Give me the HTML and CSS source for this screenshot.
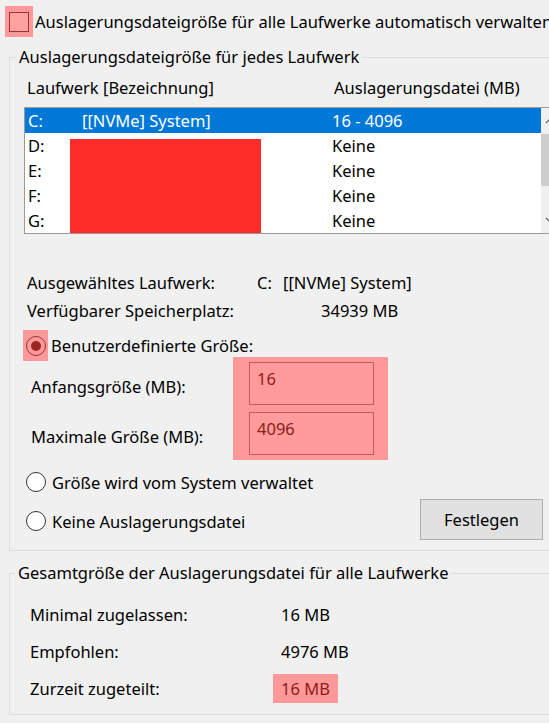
FILE: index.html
```html
<!DOCTYPE html>
<html lang="de">
<head>
    <meta charset="UTF-8">
    <meta name="viewport" content="width=device-width, initial-scale=1.0">
    <title>Virtueller Arbeitsspeicher</title>
    <link rel="stylesheet" href="styles.css">
</head>
<body>
    <div class="dialog">
        <!-- Automatic management checkbox -->
        <label class="auto-row">
            <span class="mark check-mark"><span class="checkbox"></span></span>
            <span class="auto-text">Auslagerungsdateigröße für alle Laufwerke automatisch verwalten</span>
        </label>

        <!-- Per drive settings -->
        <fieldset class="group drives">
            <legend>Auslagerungsdateigröße für jedes Laufwerk</legend>

            <div class="list-head">
                <span class="col-drive">Laufwerk [Bezeichnung]</span>
                <span>Auslagerungsdatei (MB)</span>
            </div>

            <div class="drive-list">
                <div class="rows">
                    <div class="row selected"><span>C:</span><span>[[NVMe] System]</span><span>16 - 4096</span></div>
                    <div class="row"><span>D:</span><span></span><span>Keine</span></div>
                    <div class="row"><span>E:</span><span></span><span>Keine</span></div>
                    <div class="row"><span>F:</span><span></span><span>Keine</span></div>
                    <div class="row"><span>G:</span><span></span><span>Keine</span></div>
                </div>
                <div class="scrollbar">
                    <div class="scroll-btn">
                        <svg width="9" height="6" viewBox="0 0 9 6"><polyline points="1,5 4.5,1.5 8,5" fill="none" stroke="#606060" stroke-width="1.2"/></svg>
                    </div>
                    <div class="thumb"></div>
                    <div class="track"></div>
                    <div class="scroll-btn">
                        <svg width="9" height="6" viewBox="0 0 9 6"><polyline points="1,1 4.5,4.5 8,1" fill="none" stroke="#606060" stroke-width="1.2"/></svg>
                    </div>
                </div>
                <!-- hidden drive names -->
                <div class="redact"></div>
            </div>

            <div class="info-row">
                <span class="info-label">Ausgewähltes Laufwerk:</span>
                <span class="drive-letter">C:</span><span>[[NVMe] System]</span>
            </div>
            <div class="info-row">
                <span class="info-label">Verfügbarer Speicherplatz:</span>
                <span class="free-space">34939 MB</span>
            </div>

            <label class="radio-row custom">
                <span class="mark radio-mark"><span class="radio checked"></span></span>
                <span class="radio-text">Benutzerdefinierte Größe:</span>
            </label>

            <div class="size-fields">
                <div class="size-labels">
                    <span>Anfangsgröße (MB):</span>
                    <span>Maximale Größe (MB):</span>
                </div>
                <div class="size-inputs">
                    <input class="field" type="text" value="16">
                    <input class="field" type="text" value="4096">
                </div>
            </div>

            <label class="radio-row system">
                <span class="radio"></span>
                <span class="radio-text">Größe wird vom System verwaltet</span>
            </label>
            <div class="radio-row none">
                <label class="radio-label">
                    <span class="radio"></span>
                    <span class="radio-text">Keine Auslagerungsdatei</span>
                </label>
                <button class="set-button">Festlegen</button>
            </div>
        </fieldset>

        <!-- Totals for all drives -->
        <fieldset class="group totals">
            <legend>Gesamtgröße der Auslagerungsdatei für alle Laufwerke</legend>
            <div class="total-row"><span class="total-label">Minimal zugelassen:</span><span>16 MB</span></div>
            <div class="total-row"><span class="total-label">Empfohlen:</span><span>4976 MB</span></div>
            <div class="total-row"><span class="total-label">Zurzeit zugeteilt:</span><span class="mark value-mark">16 MB</span></div>
        </fieldset>
    </div>
</body>
</html>
```

FILE: styles.css
```css
/* Global styles */
body {
    margin: 0;
    background-color: #f0f0f0;
    font-family: "Noto Sans", "Open Sans", sans-serif;
    font-size: 16.5px;
    color: #000;
    overflow: hidden;
}

.dialog {
    width: 580px;
}

/* Highlight marker */
.mark {
    background-color: #ff9999;
    color: #8e1c1c;
}

/* Top checkbox */
.auto-row {
    display: flex;
    align-items: center;
    height: 31px;
    padding: 6px 0 0 5px;
    margin-bottom: 8px;
    white-space: nowrap;
}
.check-mark {
    display: flex;
    align-items: center;
    justify-content: center;
    width: 28px;
    height: 31px;
}
.checkbox {
    width: 18px;
    height: 18px;
    border: 1px solid #9a3434;
    background-color: #fca0a0;
}
.auto-text {
    margin-left: 2px;
}

/* Group boxes */
.group {
    margin: 0 0 0 9px;
    padding: 0 0 8px 14px;
    width: 560px;
    min-width: 0;
    box-sizing: border-box;
    border: 1px solid #dcdcdc;
}
.group legend {
    margin-left: -8px;
    padding: 0 3px;
    line-height: 24px;
    white-space: nowrap;
}

/* Drive list */
.list-head {
    display: flex;
    height: 38px;
    line-height: 38px;
    padding-left: 3px;
}
.col-drive {
    width: 307px;
}
.drive-list {
    position: relative;
    display: flex;
    width: 533px;
    height: 125px;
    border: 1px solid #9a9a9a;
    background-color: #fff;
}
.rows {
    flex: 1;
}
.row {
    display: grid;
    grid-template-columns: 54px 250px 1fr;
    height: 25px;
    line-height: 25px;
    padding-left: 3px;
}
.row.selected {
    background-color: #0078d7;
    color: #fff;
}
.scrollbar {
    display: flex;
    flex-direction: column;
    width: 17px;
    background-color: #f0f0f0;
}
.scroll-btn {
    display: flex;
    align-items: center;
    justify-content: center;
    height: 26px;
}
.thumb {
    height: 52px;
    background-color: #cdcdcd;
}
.track {
    flex: 1;
}
.redact {
    position: absolute;
    left: 45px;
    top: 31px;
    width: 191px;
    height: 94px;
    background-color: #ff2d2a;
}

/* Selected drive info */
.info-row {
    display: flex;
    height: 28px;
    line-height: 28px;
    padding-left: 3px;
    white-space: nowrap;
}
.drive-list + .info-row {
    margin-top: 35px;
}
.info-label {
    width: 230px;
}
.drive-letter {
    width: 26px;
}
.free-space {
    margin-left: 64px;
}

/* Radio buttons */
.radio-row {
    display: flex;
    align-items: center;
    white-space: nowrap;
}
.radio {
    box-sizing: border-box;
    display: flex;
    align-items: center;
    justify-content: center;
    width: 20px;
    height: 20px;
    border: 1px solid #333;
    border-radius: 50%;
    background-color: #fff;
}
.radio-mark {
    display: flex;
    align-items: center;
    justify-content: center;
    width: 25px;
    height: 31px;
    margin-left: -1px;
}
.radio-mark .radio {
    border-color: #8d3a3a;
    background-color: #ff9999;
}
.radio.checked::after {
    content: "";
    width: 10px;
    height: 10px;
    border-radius: 50%;
    background-color: #9c2424;
}
.radio-row.custom {
    height: 31px;
    margin-top: 5px;
}
.radio-row.custom .radio-text {
    margin-left: 3px;
}
.radio-row.system {
    height: 30px;
    margin-top: 7px;
    padding-left: 2px;
}
.radio-row.none {
    height: 45px;
    width: 519px;
    padding-left: 2px;
    box-sizing: border-box;
}
.radio-label {
    display: flex;
    align-items: center;
    padding-top: 3px;
}
.radio-row.system .radio-text,
.radio-label .radio-text {
    margin-left: 6px;
}

/* Custom size fields */
.size-fields {
    display: flex;
    margin-top: -4px;
}
.size-labels {
    display: flex;
    flex-direction: column;
    gap: 7px;
    width: 209px;
    padding: 8px 0 0 7px;
    box-sizing: border-box;
}
.size-labels span {
    height: 43px;
    line-height: 43px;
}
.size-inputs {
    display: flex;
    flex-direction: column;
    gap: 7px;
    padding: 5px 14px 5px 16px;
    background-color: #ff9999;
}
.field {
    box-sizing: border-box;
    width: 125px;
    height: 43px;
    margin: 0;
    padding: 3px 7px 14px;
    border: 1px solid #c45a5a;
    background-color: #ff9b9b;
    font-family: inherit;
    font-size: 16.5px;
    color: #8e1c1c;
    outline: none;
}

/* Set button */
.set-button {
    margin-left: auto;
    width: 123px;
    height: 41px;
    border: 1px solid #adadad;
    background-color: #e1e1e1;
    font-family: inherit;
    font-size: 16.5px;
    color: #000;
    padding: 0;
}

/* Totals */
.group.totals {
    margin-top: 10px;
    padding: 11px 0 7px 20px;
}
.group.totals legend {
    margin-left: -15px;
}
.total-row {
    display: flex;
    align-items: center;
    height: 37px;
    white-space: nowrap;
}
.total-label {
    width: 251px;
}
.value-mark {
    display: inline-block;
    margin-left: -8px;
    padding: 0 8px;
    line-height: 29px;
}
```
